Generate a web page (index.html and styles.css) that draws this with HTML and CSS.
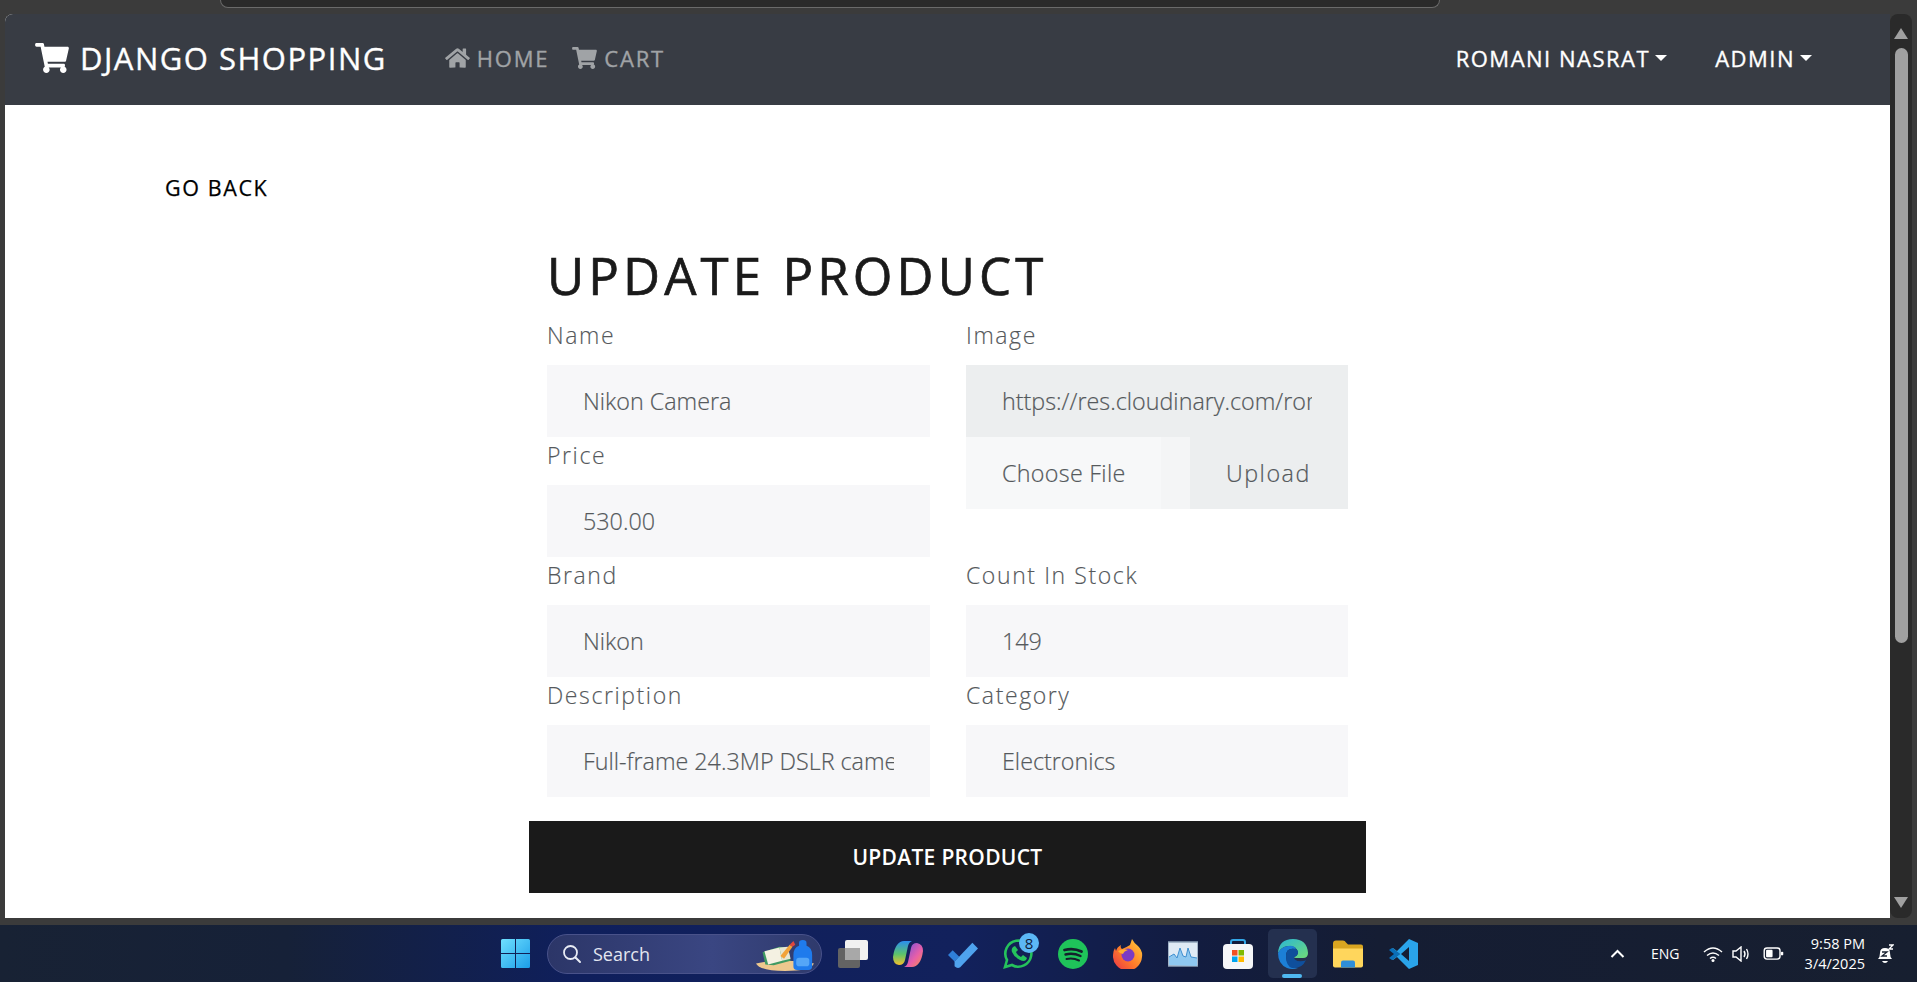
FILE: index.html
```html
<!DOCTYPE html>
<html lang="en">
<head>
<meta charset="utf-8">
<title>Django Shopping</title>
<link rel="stylesheet" href="styles.css">
</head>
<body>
<div class="chrome"><div class="address"></div></div>
<div class="window">
  <div class="page">
    <nav class="navbar">
      <a class="brand"><svg class="brand-icon" viewBox="0 0 576 512"><path d="M528.12 301.319l47.273-208C578.806 78.301 567.391 64 551.99 64H159.208l-9.166-44.81C147.758 8.021 137.93 0 126.529 0H24C10.745 0 0 10.745 0 24v16c0 13.255 10.745 24 24 24h69.883l70.248 343.435C147.325 417.1 136 435.222 136 456c0 30.928 25.072 56 56 56s56-25.072 56-56c0-15.674-6.447-29.835-16.824-40h209.647C430.447 426.165 424 440.326 424 456c0 30.928 25.072 56 56 56s56-25.072 56-56c0-22.172-12.888-41.332-31.579-50.405l5.517-24.276c3.413-15.018-8.002-29.319-23.403-29.319H218.117l-6.545-32h293.145c11.206 0 20.92-7.754 23.403-18.681z"/></svg>DJANGO SHOPPING</a>
      <a class="nav-link"><svg class="nav-icon" viewBox="0 0 576 512"><path d="M280.37 148.26L96 300.11V464a16 16 0 0 0 16 16l112.06-.29a16 16 0 0 0 15.92-16V368a16 16 0 0 1 16-16h64a16 16 0 0 1 16 16v95.64a16 16 0 0 0 16 16.05L464 480a16 16 0 0 0 16-16V300L295.67 148.26a12.19 12.19 0 0 0-15.3 0zM571.6 251.47L488 182.56V44.05a12 12 0 0 0-12-12h-56a12 12 0 0 0-12 12v72.61L318.47 43a48 48 0 0 0-61 0L4.34 251.47a12 12 0 0 0-1.6 16.9l25.5 31A12 12 0 0 0 45.15 301l235.22-193.74a12.19 12.19 0 0 1 15.3 0L530.9 301a12 12 0 0 0 16.9-1.6l25.5-31a12 12 0 0 0-1.7-16.93z"/></svg>HOME</a>
      <a class="nav-link"><svg class="nav-icon" viewBox="0 0 576 512"><path d="M528.12 301.319l47.273-208C578.806 78.301 567.391 64 551.99 64H159.208l-9.166-44.81C147.758 8.021 137.93 0 126.529 0H24C10.745 0 0 10.745 0 24v16c0 13.255 10.745 24 24 24h69.883l70.248 343.435C147.325 417.1 136 435.222 136 456c0 30.928 25.072 56 56 56s56-25.072 56-56c0-15.674-6.447-29.835-16.824-40h209.647C430.447 426.165 424 440.326 424 456c0 30.928 25.072 56 56 56s56-25.072 56-56c0-22.172-12.888-41.332-31.579-50.405l5.517-24.276c3.413-15.018-8.002-29.319-23.403-29.319H218.117l-6.545-32h293.145c11.206 0 20.92-7.754 23.403-18.681z"/></svg>CART</a>
      <div class="nav-right">
        <a class="dropdown">ROMANI NASRAT<span class="caret"></span></a>
        <a class="dropdown">ADMIN<span class="caret"></span></a>
      </div>
    </nav>
    <main class="main">
      <a class="back">GO BACK</a>
      <section class="form-wrap">
        <h1 class="title">UPDATE PRODUCT</h1>
        <form class="form">
          <div class="grid">
            <div class="col">
              <div class="field"><label class="label">Name</label><input class="input" value="Nikon Camera"></div>
              <div class="field"><label class="label">Price</label><input class="input" value="530.00"></div>
            </div>
            <div class="col">
              <div class="field"><label class="label">Image</label><input class="input input-dim" value="https://res.cloudinary.com/romaninasrat/image/upload/nikon.jpg"></div>
              <div class="file-row"><span class="file-name">Choose File</span><span class="file-gap"></span><span class="file-btn">Upload</span></div>
            </div>
            <div class="field"><label class="label">Brand</label><input class="input" value="Nikon"></div>
            <div class="field"><label class="label">Count In Stock</label><input class="input" value="149"></div>
            <div class="field"><label class="label">Description</label><input class="input" value="Full-frame 24.3MP DSLR camera with Wi-Fi"></div>
            <div class="field"><label class="label">Category</label><input class="input" value="Electronics"></div>
          </div>
          <button class="submit" type="button">UPDATE PRODUCT</button>
        </form>
      </section>
    </main>
  </div>
  <div class="scrollbar">
    <span class="arrow arrow-up"></span>
    <div class="track"><div class="thumb"></div></div>
    <span class="arrow arrow-down"></span>
  </div>
</div>
<footer class="taskbar">
  <div class="task-center">
    <svg class="tb-start" viewBox="0 0 29 29"><defs><linearGradient id="win" x1="0" y1="0" x2="1" y2="1"><stop offset="0" stop-color="#6fe0ff"/><stop offset="1" stop-color="#1b9de8"/></linearGradient></defs><path fill="url(#win)" d="M0 1.5A1.5 1.5 0 0 1 1.5 0H14v14H0zM15 0h12.5A1.5 1.5 0 0 1 29 1.500V14H15zM0 15h14v14H1.500A1.500 1.500 0 0 1 0 27.500zM15 15h14v12.500a1.500 1.500 0 0 1-1.500 1.500H15z"/></svg>
    <div class="search">
      <svg class="search-icon" viewBox="0 0 20 20"><circle cx="8.500" cy="8.500" r="6.500" fill="none" stroke="#e8ecf5" stroke-width="1.800"/><path d="M13.500 13.500L18 18" stroke="#e8ecf5" stroke-width="2" stroke-linecap="round"/></svg>
      <span class="search-text">Search</span>
      <svg class="search-art" viewBox="0 0 62 34"><path d="M0 25q14-3 31-3t31 3q-4 8-31 8T0 25z" fill="#eec88e"/><path d="M7 13l18-6 9 1 3 14-18 5-9-1z" fill="#3f9a62"/><path d="M9 12l16-4 3 14-15 4z" fill="#f4f1e2"/><path d="M25 8l9-1 3 13-9 2z" fill="#e7e6d2"/><path d="M26 17L36 5l3 2-9 13z" fill="#f2a33a"/><path d="M36 5l4-4 2 4-3 2z" fill="#e0473c"/><path d="M40 16q0-8 6-10V3q0-3 4-3t4 3v3q6 2 6 10v12q0 4-4 4H44q-4 0-4-4z" fill="#1f7bec"/><rect x="43" y="19" width="14" height="9" rx="3" fill="#55a6f7"/></svg>
    </div>
    <span class="slot"><svg class="tb-icon" viewBox="0 0 30 28"><rect x="0" y="8" width="22" height="20" rx="2" fill="#636363"/><rect x="7" y="0" width="23" height="20" rx="2" fill="#f1f1f1"/><rect x="7" y="8" width="15" height="12" fill="#a8a8a8"/></svg></span>
    <span class="slot"><svg class="tb-icon" viewBox="0 0 30 30"><defs><linearGradient id="cop1" x1="0" y1="0" x2="0" y2="1"><stop offset="0" stop-color="#2a8ef0"/><stop offset=".55" stop-color="#5cc46a"/><stop offset="1" stop-color="#f3c02e"/></linearGradient><linearGradient id="cop2" x1="0" y1="0" x2="1" y2="1"><stop offset="0" stop-color="#6a4fe0"/><stop offset=".6" stop-color="#e85fa8"/><stop offset="1" stop-color="#f6914a"/></linearGradient></defs><path fill="url(#cop1)" d="M11 2h8q-3 1-4 5l-3 14q-1 5-6 5q-6-1-6-8q1-8 4-12q3-4 7-4z"/><path fill="url(#cop2)" d="M19 28h-8q3-1 4-5l3-14q1-5 6-5q6 1 6 8q-1 8-4 12q-3 4-7 4z"/></svg></span>
    <span class="slot"><svg class="tb-icon" viewBox="0 0 32 28"><path fill="#2f7fd9" d="M0 15l5-5 7 7-5 5z"/><path fill="#4fa3ee" d="M7 22L26 2l6 6-19 20q-3 2-6-1z"/></svg></span>
    <span class="slot slot-badge"><svg class="tb-icon" viewBox="0 0 30 30"><path fill="none" stroke="#25c25c" stroke-width="2.600" d="M2 28l2-7A13 13 0 1 1 9 26z"/><path fill="#25c25c" d="M10 8l2-1 3 4-2 2q1 3 5 5l2-2 4 3-1 2q-2 2-6 0q-6-3-8-8q-1-3 1-5z"/></svg><span class="badge">8</span></span>
    <span class="slot"><svg class="tb-icon" viewBox="0 0 30 30"><circle cx="15" cy="15" r="15" fill="#1fc45a"/><g fill="none" stroke="#14202c" stroke-linecap="round"><path stroke-width="2.800" d="M6.500 11q9-2.500 17 1.500"/><path stroke-width="2.400" d="M7.500 15.500q7.500-2 15 1.500"/><path stroke-width="2" d="M8.500 20q6.500-1.500 12.500 1.500"/></g></svg></span>
    <span class="slot"><svg class="tb-icon" viewBox="0 0 30 30"><defs><linearGradient id="ff" x1="1" y1="0" x2="0" y2="1"><stop offset="0" stop-color="#ffd23a"/><stop offset=".55" stop-color="#ff7a2a"/><stop offset="1" stop-color="#e8314a"/></linearGradient></defs><path fill="url(#ff)" d="M19 0q2 4 6 7q5 5 4 11a14.500 14.500 0 0 1-29-2q0-4 2-7l1 3q1-4 5-6q-1 3 1 4q5-2 8-4q1-3 2-6z"/><circle cx="15" cy="16" r="6.500" fill="#7a3bc4"/><path fill="#ffb02e" d="M5 12q5-3 10-1q-4 1-5 4q-3 0-5-3z"/></svg></span>
    <span class="slot"><svg class="tb-icon" viewBox="0 0 30 24"><rect width="30" height="24" fill="#dfeaf5" stroke="#8fa2b8" stroke-width="1.500"/><path fill="#8fc8f0" d="M1 23V15l5-3 3 4 3-10 3 8 3 1 2-9 3 9 6 1v8z"/><path fill="none" stroke="#3f8fd0" d="M1 15l5-3 3 4 3-10 3 8 3 1 2-9 3 9 6 1"/></svg></span>
    <span class="slot"><svg class="tb-icon" viewBox="0 0 30 30"><path fill="none" stroke="#34a8e8" stroke-width="2" d="M8 8V3q0-2 2-2h10q2 0 2 2v5"/><rect y="5" width="30" height="25" rx="4" fill="#f5f6f8"/><rect x="9" y="11" width="5.500" height="5.500" fill="#f25022"/><rect x="15.500" y="11" width="5.500" height="5.500" fill="#7fba00"/><rect x="9" y="17.500" width="5.500" height="5.500" fill="#00a4ef"/><rect x="15.500" y="17.500" width="5.500" height="5.500" fill="#ffb900"/></svg></span>
    <span class="slot slot-active"><svg class="tb-icon" viewBox="0 0 30 30"><defs><linearGradient id="ed1" x1="0" y1="0" x2="1" y2="1"><stop offset="0" stop-color="#2ab5d6"/><stop offset="1" stop-color="#6fdc78"/></linearGradient></defs><path fill="url(#ed1)" d="M0 14Q1 0 15 0q14 0 15 14 0 5-5 5h-7q-2 0-2-1 4-1 4-5-2-7-10-6-7 1-10 7z"/><path fill="#1c7fd6" d="M0 14q3-6 10-7 6-1 8 3-10-2-10 7 0 10 12 12Q14 31 9 29 0 25 0 14z"/><path fill="#0f4f9c" d="M8 17q0-9 10-7 2 1 2 3 0 4-4 5 0 5 9 4 2 0 3-1-4 9-14 8Q8 27 8 17z"/></svg><span class="active-bar"></span></span>
    <span class="slot"><svg class="tb-icon" viewBox="0 0 30 27"><path fill="#d9a520" d="M0 3q0-3 3-3h7q2 0 3 2l2 2h13q2 0 2 2v6H0z"/><path fill="#ffd65c" d="M0 8h30v17q0 2-2 2H2q-2 0-2-2z"/><path fill="#2f8ed8" d="M8 27v-5q0-2 2-2h10q2 0 2 2v5z"/></svg></span>
    <span class="slot"><svg class="tb-icon" viewBox="0 0 30 30"><path fill="#0a6fb8" d="M1 11l3-2 8 6-8 6-3-2 5-4z"/><path fill="#2aa4ea" d="M21 0l9 4v22l-9 4L9 18l-4 3-1 0 8-6-8-6 1 0 4 3zM21 8l-8 7 8 7z" fill-rule="evenodd"/></svg></span>
  </div>
  <div class="tray">
    <svg class="tray-chevron" viewBox="0 0 14 9"><path d="M1 8l6-6 6 6" fill="none" stroke="#fff" stroke-width="2"/></svg>
    <span class="tray-lang">ENG</span>
    <svg class="tray-wifi" viewBox="0 0 20 16"><g fill="none" stroke="#fff" stroke-width="1.500"><path d="M1 6q9-8 18 0"/><path d="M4 9.500q6-5 12 0"/><path d="M7 12.500q3-2.500 6 0"/></g><circle cx="10" cy="14.500" r="1.500" fill="#fff"/></svg>
    <svg class="tray-sound" viewBox="0 0 20 16"><path d="M1 5h3l5-4v14l-5-4H1z" fill="none" stroke="#fff" stroke-width="1.400"/><path d="M12 5q2 3 0 6M14.500 3q3 5 0 10" fill="none" stroke="#fff" stroke-width="1.400"/></svg>
    <svg class="tray-battery" viewBox="0 0 22 14"><rect x="1" y="1" width="17" height="12" rx="3" fill="none" stroke="#fff" stroke-width="1.500"/><rect x="3" y="3" width="7" height="8" rx="1" fill="#fff"/><rect x="19" y="5" width="2.500" height="4" rx="1" fill="#fff"/></svg>
    <div class="clock"><span>9:58 PM</span><span>3/4/2025</span></div>
    <svg class="tray-bell" viewBox="0 0 18 20"><path d="M2 15q2-2 2-6 0-5 5-5t5 5q0 4 2 6z" fill="#fff"/><path d="M6 17h6q-1 2-3 2t-3-2z" fill="#fff"/><path d="M13 1h4l-4 4h4" fill="none" stroke="#fff" stroke-width="1.300"/><path d="M6 8h5l-5 4h5" fill="none" stroke="#1a2333" stroke-width="1.300"/></svg>
  </div>
</footer>
</body>
</html>
```

FILE: styles.css
```css
* { box-sizing: border-box; }
html, body { margin: 0; height: 100%; }
body {
  width: 1917px;
  height: 982px;
  overflow: hidden;
  background: #3b3b3b;
  font-family: "Open Sans", "Noto Sans", sans-serif;
  display: flex;
  flex-direction: column;
}
.chrome { height: 14px; padding-left: 220px; flex: none; }
.address {
  width: 1220px;
  height: 8px;
  background: #2a2a2a;
  border: 1px solid #6a6a6a;
  border-top: 0;
  border-radius: 0 0 14px 14px;
}
.window { height: 904px; flex: none; display: flex; padding-left: 5px; padding-right: 5px; }
.page { width: 1885px; display: flex; flex-direction: column; background: #fff; border-top-left-radius: 8px; overflow: hidden; }
.navbar {
  height: 91px;
  flex: none;
  background: #383c44;
  display: flex;
  align-items: center;
  padding-left: 30px;
  padding-bottom: 4px;
  font-size: 22px;
  font-weight: 400;
  letter-spacing: 1.500px;
  -webkit-text-stroke: .35px;
}
.brand { display: flex; align-items: center; color: #fff; font-size: 31px; letter-spacing: 1.500px; margin-right: 58px; }
.brand-icon { width: 34px; height: 30px; fill: #fff; margin-right: 11px; }
.nav-link { display: flex; align-items: center; color: #a0a3a6; margin-right: 23px; letter-spacing: 1.800px; }
.nav-icon { width: 25px; height: 22px; fill: #a0a3a6; margin-right: 7px; }
.nav-right { margin-left: auto; display: flex; padding-right: 78px; gap: 48px; }
.dropdown { color: #fff; display: flex; align-items: center; }
.caret { width: 0; height: 0; border: 6px solid transparent; border-top-color: #fff; border-bottom: 0; margin-left: 5px; }
.main { flex: 1; overflow: hidden; padding-top: 66px; }
.back { display: block; margin-left: 160px; color: #000; font-size: 21.500px; font-weight: 400; letter-spacing: 1.600px; line-height: 34px; -webkit-text-stroke: .25px; }
.form-wrap { width: 837px; margin: 0 auto; }
.title { margin: 42px 18px 0; font-size: 51px; font-weight: 400; letter-spacing: 4.100px; line-height: 56px; color: #1a1a1a; height: 70px; -webkit-text-stroke: .7px; }
.grid { display: grid; grid-template-columns: 383px 382px; column-gap: 36px; margin: 0 18px; }
.col { display: flex; flex-direction: column; }
.field { display: flex; flex-direction: column; }
.label { height: 48px; line-height: 36px; font-size: 23px; font-weight: 300; letter-spacing: 1.600px; color: #55595c; -webkit-text-stroke: .15px; }
.input {
  height: 72px;
  width: 100%;
  border: 0;
  outline: 0;
  padding: 0 36px;
  background: #f7f7f9;
  color: #55595c;
  font: inherit;
  font-size: 23.300px;
  font-weight: 300;
  margin: 0;
  -webkit-text-stroke: .2px;
}
.input-dim { background: #eceeef; }
.file-row { display: flex; height: 72px; font-size: 23.300px; font-weight: 300; color: #55595c; letter-spacing: 1.500px; -webkit-text-stroke: .2px; }
.file-name { width: 195px; background: #f7f8f9; padding-left: 36px; line-height: 72px; letter-spacing: .3px; }
.file-gap { width: 29px; background: #f4f5f6; }
.file-btn { flex: 1; background: #eceeef; padding-left: 36px; line-height: 72px; }
.submit {
  display: block;
  width: 100%;
  height: 72px;
  margin-top: 24px;
  border: 0;
  background: #1a1a1a;
  color: #fff;
  font: inherit;
  font-size: 21px;
  font-weight: 600;
  letter-spacing: .3px;
}
.scrollbar { width: 22px; flex: none; background: #2a2a2a; border-radius: 8px; display: flex; flex-direction: column; align-items: center; padding: 14px 0 10px; }
.arrow { width: 0; height: 0; border: 7px solid transparent; flex: none; }
.arrow-up { border-top: 0; border-bottom: 11px solid #a0a0a0; }
.arrow-down { border-bottom: 0; border-top: 11px solid #a0a0a0; }
.track { flex: 1; width: 13px; padding-top: 9px; }
.thumb { height: 595px; background: #a0a0a0; border-radius: 7px; }
.taskbar {
  height: 57px;
  margin-top: 7px;
  flex: none;
  position: relative;
  background: linear-gradient(90deg, #182234 0, #162138 15%, #0f1f5c 30%, #12215c 50%, #121c40 62%, #151d33 72%, #171f30 100%);
  display: flex;
  align-items: center;
}
.task-center { display: flex; align-items: center; padding-left: 501px; height: 100%; }
.tb-start { width: 29px; height: 29px; margin-right: 17px; }
.search {
  width: 275px;
  height: 40px;
  border-radius: 20px;
  background: linear-gradient(90deg, #2c3668, #3a4682 60%, #2f3a6c);
  border: 1px solid #49528a;
  display: flex;
  align-items: center;
  padding-left: 14px;
  margin-right: 3px;
  position: relative;
}
.search-icon { width: 20px; height: 20px; margin-right: 11px; }
.search-text { color: #e3e6f0; font-size: 18px; }
.search-art { width: 58px; height: 32px; position: absolute; right: 7px; top: 5px; }
.slot { width: 55px; height: 100%; display: flex; align-items: center; justify-content: center; position: relative; }
.tb-icon { width: 30px; height: 30px; }
.slot-active::before { content: ""; position: absolute; left: 3px; right: 3px; top: 4px; bottom: 4px; background: #24304f; border-radius: 5px; }
.slot-active .tb-icon { position: relative; }
.active-bar { position: absolute; bottom: 4px; left: 17px; width: 20px; height: 4px; border-radius: 2px; background: #4fb8f0; }
.badge {
  position: absolute;
  left: 29px;
  top: 8px;
  width: 20px;
  height: 20px;
  border-radius: 50%;
  background: #5cb8f5;
  color: #10203c;
  font-size: 15px;
  line-height: 20px;
  text-align: center;
}
.tray { position: absolute; left: 1610px; top: 0; height: 100%; display: flex; align-items: center; color: #fff; }
.tray-chevron { width: 15px; height: 9px; margin-right: 26px; }
.tray-lang { font-size: 14px; width: 29px; margin-right: 23px; }
.tray-wifi { width: 20px; height: 16px; margin-right: 9px; }
.tray-sound { width: 20px; height: 16px; margin-right: 11px; }
.tray-battery { width: 21px; height: 13px; }
.clock { width: 68px; margin-left: 13px; display: flex; flex-direction: column; align-items: flex-end; font-size: 14.500px; line-height: 20px; white-space: nowrap; }
.tray-bell { width: 18px; height: 20px; margin-left: 11px; }
```
